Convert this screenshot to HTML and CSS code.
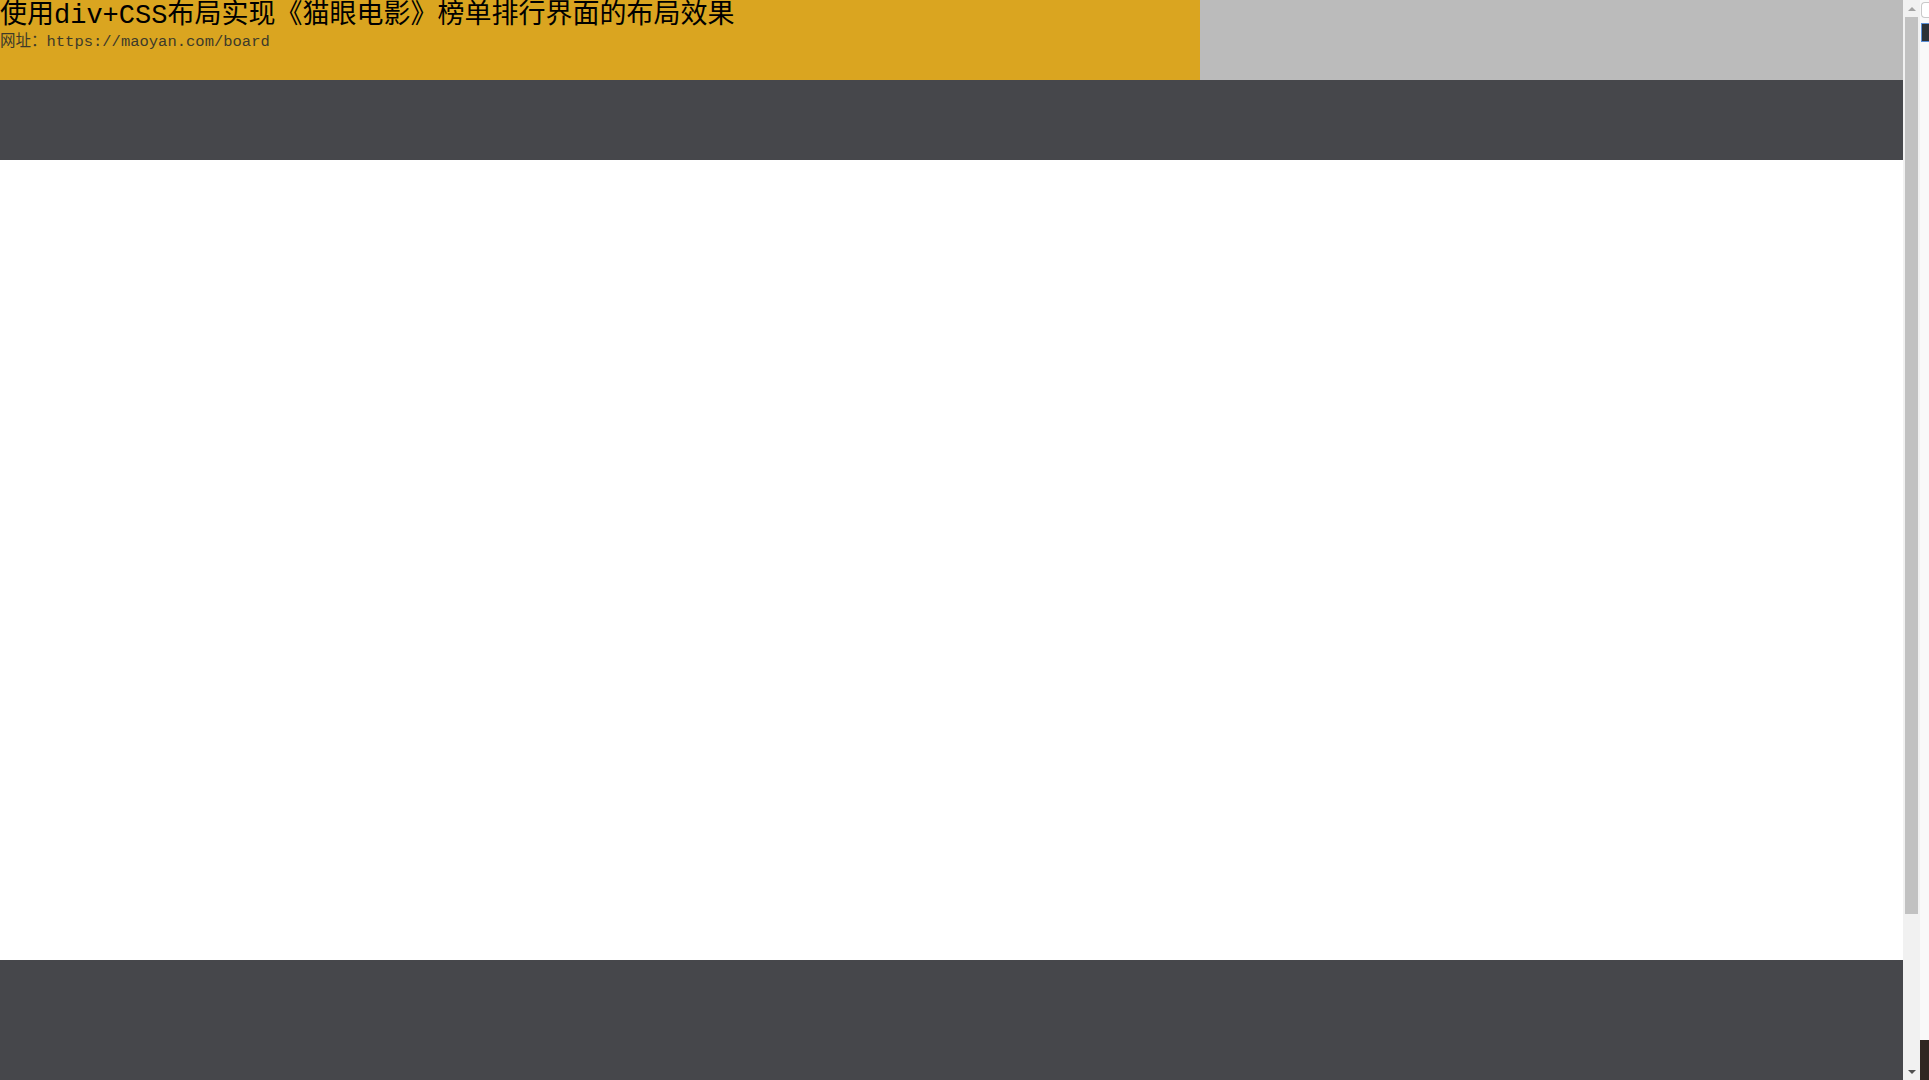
FILE: index.html
```html
<!DOCTYPE html>
<html lang="zh-CN">
<head>
<meta charset="utf-8">
<title>猫眼电影榜单</title>
<link rel="stylesheet" href="styles.css">
</head>
<body>
<div class="screen">
  <div class="page">
    <header class="top">
      <div class="intro">
        <h1 class="title">使用div+CSS布局实现《猫眼电影》榜单排行界面的布局效果</h1>
        <p class="url">网址：https://maoyan.com/board</p>
      </div>
      <div class="top-side"></div>
    </header>
    <nav class="navbar"></nav>
    <main class="content"></main>
    <footer class="footer"></footer>
  </div>
  <div class="scrollbar">
    <div class="arrow arrow-up"></div>
    <div class="track"><div class="thumb"></div></div>
    <div class="arrow arrow-down"></div>
  </div>
  <div class="edge">
    <div class="edge-top">
      <div class="edge-chip"></div>
      <div class="edge-box"></div>
    </div>
    <div class="edge-bottom"></div>
  </div>
</div>
</body>
</html>
```

FILE: styles.css
```css
html, body {
  margin: 0;
  padding: 0;
  overflow: hidden;
  background: #ffffff;
}

.screen {
  width: 1929px;
  height: 1080px;
  display: flex;
  overflow: hidden;
}

.page {
  width: 1903px;
  flex: none;
  display: flex;
  flex-direction: column;
}

.top {
  height: 80px;
  flex: none;
  display: grid;
  grid-template-columns: 1200px 1fr;
}

.intro {
  background: #daa520;
  padding-top: 2px;
}

.top-side {
  background: #bbbbbb;
}

.title {
  margin: 0;
  font-family: "Liberation Mono", "Noto Sans CJK SC", monospace;
  font-weight: normal;
  font-size: 27px;
  line-height: 29px;
  color: #000000;
}

.url {
  margin: 0;
  font-family: "Liberation Mono", "Noto Sans CJK SC", monospace;
  font-size: 15.5px;
  line-height: 22px;
  color: #3d3a2a;
}

.navbar {
  height: 80px;
  flex: none;
  background: #46474b;
}

.content {
  height: 800px;
  flex: none;
  background: #ffffff;
}

.footer {
  height: 300px;
  flex: none;
  background: #46474b;
}

.scrollbar {
  width: 17px;
  flex: none;
  background: #f1f1f1;
  display: flex;
  flex-direction: column;
}

.arrow {
  height: 17px;
  flex: none;
  display: flex;
  align-items: center;
  justify-content: center;
}

.arrow::before {
  content: "";
  width: 0;
  height: 0;
  border-left: 4px solid transparent;
  border-right: 4px solid transparent;
}

.arrow-up::before {
  border-bottom: 4px solid #a3a3a3;
}

.arrow-down::before {
  border-top: 4px solid #505050;
}

.track {
  flex: 1;
  padding: 0 2px;
}

.thumb {
  height: 897px;
  background: #c1c1c1;
}

.edge {
  width: 9px;
  flex: none;
  background: #f9f9f9;
  display: flex;
  flex-direction: column;
  justify-content: space-between;
}

.edge-top {
  display: flex;
  flex-direction: column;
  gap: 5px;
  padding-top: 2px;
  padding-left: 1px;
}

.edge-chip {
  height: 14px;
  border: 1px solid #c9c9c9;
  border-right: none;
  border-radius: 4px 0 0 4px;
  background: #ffffff;
}

.edge-box {
  height: 17px;
  border: 1px solid #5b8fd6;
  border-right: none;
  background: #2c3136;
}

.edge-bottom {
  height: 40px;
  background: #2f2622;
}
```
